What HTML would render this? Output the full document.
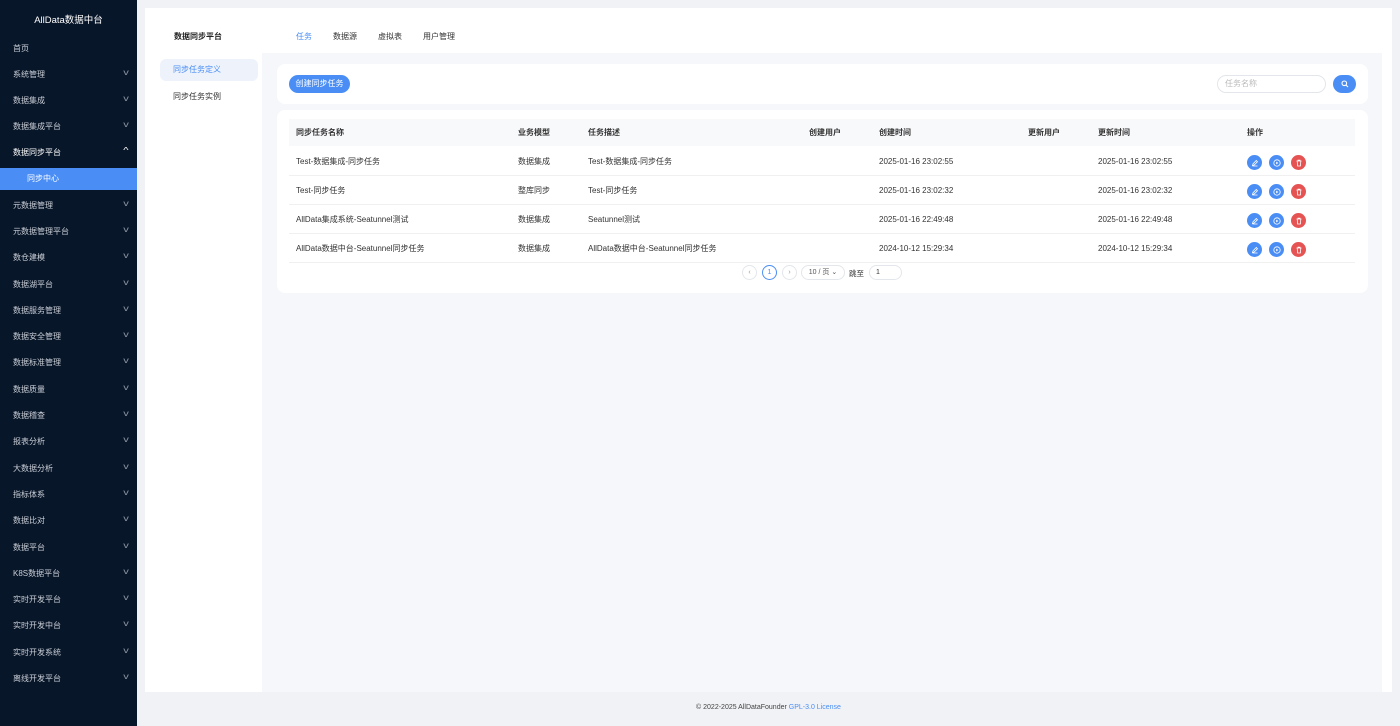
<!DOCTYPE html>
<html><head><meta charset="utf-8"><style>
*{margin:0;padding:0;box-sizing:border-box}
body{width:1400px;height:726px;overflow:hidden;background:#f0f2f5;font-family:"Liberation Sans","Noto Sans CJK SC",sans-serif;font-size:8px;color:#333;position:relative}
.side{position:absolute;left:0;top:0;width:137px;height:726px;background:#081629;color:#c9ced6}
.side .logo{position:absolute;top:12px;left:0;width:137px;text-align:center;color:#fff;font-size:9.5px}
.side .it{position:absolute;left:13px;width:115px;font-size:8px}
.side .it i{position:absolute;right:0;top:-1px;font-style:normal;font-size:8px;color:#8a94a3;transform:scaleX(1.4)}
.side .act{position:absolute;left:0;top:168px;width:137px;height:22px;background:#4a8ef5;color:#fff;padding-left:27px;line-height:22px}
.panel{position:absolute;left:145px;top:8px;width:1247px;height:684px;background:#fff}
.top{position:absolute;left:0;top:0;width:1247px;height:45px}
.top span{position:absolute;top:23px;font-size:8px}
.sub{position:absolute;left:0;top:45px;width:117px;height:639px;background:#fff}
.content{position:absolute;left:117px;top:45px;width:1120px;height:639px;background:#f5f7fa}
.card{position:absolute;background:#fff;border-radius:8px}
.btn{position:absolute;background:#4a8ef5;color:#fff;border-radius:10px;text-align:center}
.th,.tr{position:absolute;left:12px;width:1066px;height:29px;line-height:29px}
.th{background:#f8f9fb;font-weight:bold;top:9px;height:27px;line-height:27px}
.tr{border-bottom:1px solid #f0f0f0}
.th span,.tr span{position:absolute}
.ic{position:absolute;top:8px;width:15px;height:15px;border-radius:50%;background:#4a8ef5}
.ic.r{background:#e55353}
.ic svg{position:absolute;left:3.5px;top:3.5px}
.pg{position:absolute;border:1px solid #e3e6eb;border-radius:8px;height:15px;line-height:13px;text-align:center;color:#999;font-size:7px}
</style></head><body>
<div class="side">
<div class="logo">AllData数据中台</div>
<div class="it" style="top:43px">首页</div>
<div class="it" style="top:69px">系统管理<i>v</i></div>
<div class="it" style="top:95px">数据集成<i>v</i></div>
<div class="it" style="top:121px">数据集成平台<i>v</i></div>
<div class="it" style="top:147px;color:#fff">数据同步平台<i style="color:#fff">^</i></div>
<div class="act">同步中心</div>
<div class="it" style="top:200px">元数据管理<i>v</i></div>
<div class="it" style="top:226px">元数据管理平台<i>v</i></div>
<div class="it" style="top:252px">数仓建模<i>v</i></div>
<div class="it" style="top:279px">数据湖平台<i>v</i></div>
<div class="it" style="top:305px">数据服务管理<i>v</i></div>
<div class="it" style="top:331px">数据安全管理<i>v</i></div>
<div class="it" style="top:357px">数据标准管理<i>v</i></div>
<div class="it" style="top:384px">数据质量<i>v</i></div>
<div class="it" style="top:410px">数据稽查<i>v</i></div>
<div class="it" style="top:436px">报表分析<i>v</i></div>
<div class="it" style="top:463px">大数据分析<i>v</i></div>
<div class="it" style="top:489px">指标体系<i>v</i></div>
<div class="it" style="top:515px">数据比对<i>v</i></div>
<div class="it" style="top:542px">数据平台<i>v</i></div>
<div class="it" style="top:568px">K8S数据平台<i>v</i></div>
<div class="it" style="top:594px">实时开发平台<i>v</i></div>
<div class="it" style="top:620px">实时开发中台<i>v</i></div>
<div class="it" style="top:647px">实时开发系统<i>v</i></div>
<div class="it" style="top:673px">离线开发平台<i>v</i></div>
</div>
<div class="panel">
<div class="top">
<span style="left:29px;font-weight:bold;color:#222">数据同步平台</span>
<span style="left:151px;color:#4a8ef5">任务</span>
<span style="left:188px">数据源</span>
<span style="left:233px">虚拟表</span>
<span style="left:278px">用户管理</span>
</div>
<div class="sub">
<div style="position:absolute;left:15px;top:6px;width:98px;height:22px;background:#eef3fb;border-radius:6px;color:#4a8ef5;line-height:22px;padding-left:13px">同步任务定义</div>
<div style="position:absolute;left:28px;top:38px">同步任务实例</div>
<div style="position:absolute;left:123px;top:327px;width:3px;height:40px;background:#bbb;border-radius:2px"></div>
</div>
<div class="content">
<div class="card" style="left:15px;top:11px;width:1091px;height:40px">
<div class="btn" style="left:12px;top:11px;width:61px;height:18px;line-height:18px">创建同步任务</div>
<div style="position:absolute;left:940px;top:11px;width:109px;height:18px;border:1px solid #e3e6eb;border-radius:9px;color:#bbb;padding-left:7px;line-height:16px">任务名称</div>
<div class="btn" style="left:1056px;top:11px;width:23px;height:18px;line-height:18px">
<svg width="8" height="8" viewBox="0 0 8 8" style="margin-top:5px"><circle cx="3.3" cy="3.3" r="2.3" fill="none" stroke="#fff" stroke-width="1.1"/><path d="M5 5 7 7" stroke="#fff" stroke-width="1.1"/></svg></div>
</div>
<div class="card" style="left:15px;top:57px;width:1091px;height:183px">
<div class="th"><span style="left:7px">同步任务名称</span><span style="left:229px">业务模型</span><span style="left:299px">任务描述</span><span style="left:520px">创建用户</span><span style="left:590px">创建时间</span><span style="left:739px">更新用户</span><span style="left:809px">更新时间</span><span style="left:958px">操作</span></div>
<div class="tr" style="top:37px"><span style="left:7px">Test-数据集成-同步任务</span><span style="left:229px">数据集成</span><span style="left:299px">Test-数据集成-同步任务</span><span style="left:590px">2025-01-16 23:02:55</span><span style="left:809px">2025-01-16 23:02:55</span>
<div class="ic" style="left:958px"><svg width="8" height="8" viewBox="0 0 8 8"><path d="M1.5 6.5 2 4.8 5.3 1.5 6.5 2.7 3.2 6Z M1.5 7H6.5" fill="none" stroke="#fff" stroke-width=".8"/></svg></div><div class="ic" style="left:980px"><svg width="8" height="8" viewBox="0 0 8 8"><circle cx="4" cy="4" r="3.2" fill="none" stroke="#fff" stroke-width=".8"/><path d="M3.2 2.6 5.3 4 3.2 5.4Z" fill="#fff"/></svg></div><div class="ic r" style="left:1002px"><svg width="8" height="8" viewBox="0 0 8 8"><path d="M1.5 2H6.5M3 2V1.2H5V2M2.2 2 2.6 7H5.4L5.8 2" fill="none" stroke="#fff" stroke-width=".8"/></svg></div></div>
<div class="tr" style="top:66px"><span style="left:7px">Test-同步任务</span><span style="left:229px">整库同步</span><span style="left:299px">Test-同步任务</span><span style="left:590px">2025-01-16 23:02:32</span><span style="left:809px">2025-01-16 23:02:32</span>
<div class="ic" style="left:958px"><svg width="8" height="8" viewBox="0 0 8 8"><path d="M1.5 6.5 2 4.8 5.3 1.5 6.5 2.7 3.2 6Z M1.5 7H6.5" fill="none" stroke="#fff" stroke-width=".8"/></svg></div><div class="ic" style="left:980px"><svg width="8" height="8" viewBox="0 0 8 8"><circle cx="4" cy="4" r="3.2" fill="none" stroke="#fff" stroke-width=".8"/><path d="M3.2 2.6 5.3 4 3.2 5.4Z" fill="#fff"/></svg></div><div class="ic r" style="left:1002px"><svg width="8" height="8" viewBox="0 0 8 8"><path d="M1.5 2H6.5M3 2V1.2H5V2M2.2 2 2.6 7H5.4L5.8 2" fill="none" stroke="#fff" stroke-width=".8"/></svg></div></div>
<div class="tr" style="top:95px"><span style="left:7px">AllData集成系统-Seatunnel测试</span><span style="left:229px">数据集成</span><span style="left:299px">Seatunnel测试</span><span style="left:590px">2025-01-16 22:49:48</span><span style="left:809px">2025-01-16 22:49:48</span>
<div class="ic" style="left:958px"><svg width="8" height="8" viewBox="0 0 8 8"><path d="M1.5 6.5 2 4.8 5.3 1.5 6.5 2.7 3.2 6Z M1.5 7H6.5" fill="none" stroke="#fff" stroke-width=".8"/></svg></div><div class="ic" style="left:980px"><svg width="8" height="8" viewBox="0 0 8 8"><circle cx="4" cy="4" r="3.2" fill="none" stroke="#fff" stroke-width=".8"/><path d="M3.2 2.6 5.3 4 3.2 5.4Z" fill="#fff"/></svg></div><div class="ic r" style="left:1002px"><svg width="8" height="8" viewBox="0 0 8 8"><path d="M1.5 2H6.5M3 2V1.2H5V2M2.2 2 2.6 7H5.4L5.8 2" fill="none" stroke="#fff" stroke-width=".8"/></svg></div></div>
<div class="tr" style="top:124px"><span style="left:7px">AllData数据中台-Seatunnel同步任务</span><span style="left:229px">数据集成</span><span style="left:299px">AllData数据中台-Seatunnel同步任务</span><span style="left:590px">2024-10-12 15:29:34</span><span style="left:809px">2024-10-12 15:29:34</span>
<div class="ic" style="left:958px"><svg width="8" height="8" viewBox="0 0 8 8"><path d="M1.5 6.5 2 4.8 5.3 1.5 6.5 2.7 3.2 6Z M1.5 7H6.5" fill="none" stroke="#fff" stroke-width=".8"/></svg></div><div class="ic" style="left:980px"><svg width="8" height="8" viewBox="0 0 8 8"><circle cx="4" cy="4" r="3.2" fill="none" stroke="#fff" stroke-width=".8"/><path d="M3.2 2.6 5.3 4 3.2 5.4Z" fill="#fff"/></svg></div><div class="ic r" style="left:1002px"><svg width="8" height="8" viewBox="0 0 8 8"><path d="M1.5 2H6.5M3 2V1.2H5V2M2.2 2 2.6 7H5.4L5.8 2" fill="none" stroke="#fff" stroke-width=".8"/></svg></div></div>
<div class="pg" style="left:465px;top:155px;width:15px">‹</div>
<div class="pg" style="left:485px;top:155px;width:15px;border-color:#4a8ef5;color:#4a8ef5">1</div>
<div class="pg" style="left:505px;top:155px;width:15px">›</div>
<div class="pg" style="left:524px;top:155px;width:44px;color:#555">10 / 页 ⌄</div>
<div style="position:absolute;left:572px;top:158px;font-size:7.5px">跳至</div>
<div class="pg" style="left:592px;top:155px;width:33px;text-align:left;padding-left:6px;color:#333">1</div>
</div>
</div>
</div>
<div style="position:absolute;top:704px;left:0;width:1537px;text-align:center;font-size:7px;color:#444">© 2022-2025 AllDataFounder <span style="color:#4a8ef5">GPL-3.0 License</span></div>
</body></html>
